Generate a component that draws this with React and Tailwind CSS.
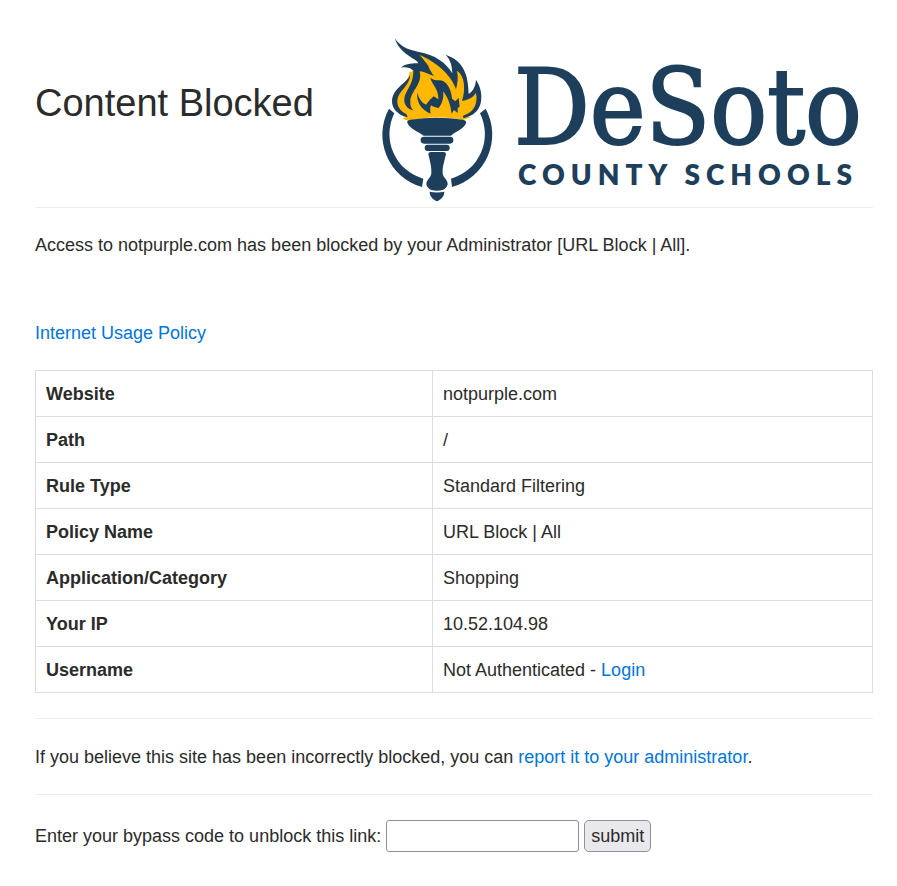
const details = [
  { label: 'Website', value: 'notpurple.com' },
  { label: 'Path', value: '/' },
  { label: 'Rule Type', value: 'Standard Filtering' },
  { label: 'Policy Name', value: 'URL Block | All' },
  { label: 'Application/Category', value: 'Shopping' },
  { label: 'Your IP', value: '10.52.104.98' },
  { label: 'Username', value: 'Not Authenticated', action: 'Login' }
];

function TextLink({ children }) {
  return (
    <a href="#" className="text-[#0275d8] hover:underline">
      {children}
    </a>
  );
}

function Logo({ className }) {
  return (
    <svg viewBox="0 0 498 177" className={className} role="img" aria-label="DeSoto County Schools">
      <g transform="scale(0.33333)" fill="#1d3f5b">
        {/* flame */}
        <path
          fill="#ffb700"
          d="M104 126 C100 160 62 175 60 214 C62 240 82 255 94 260 L82 266 L100 272 Q186 252 264 270 L286 262 L276 258 C300 245 308 230 308 212 L302 190 L284 206 L272 200 C278 170 268 125 242 112 L244 160 C220 120 185 85 130 70 L150 112 Z"
        />
        <path d="M59 25 C76 50 100 60 132 66 C178 74 214 98 232 130 C230 106 228 92 212 74 C250 88 280 112 281 192 C295 182 301 170 303 149 C318 172 322 196 317 220 C310 246 292 258 268 264 C262 264 262 258 267 256 C284 250 296 240 302 222 C305 210 306 202 302 189 C294 204 278 210 261 213 C272 178 270 138 246 122 C250 142 248 158 243 178 C232 142 190 98 134 75 C146 90 154 98 160 108 C165 120 170 130 178 138 C160 134 146 124 134 124 C144 160 108 184 106 212 C105 226 108 234 115 241 C96 236 86 222 88 206 C90 182 116 164 115 122 C104 112 92 110 78 113 C88 103 104 100 130 100 C124 84 78 78 59 25 Z" />
        <path d="M106 134 C96 160 54 172 51 212 C50 238 72 256 98 262 L94 252 C76 244 65 228 67 210 C70 182 104 168 106 134 Z" />
        <path d="M127 188 C124 216 138 238 167 251 C165 241 165 233 168 226 C175 230 182 233 191 234 C203 220 207 200 204 184 C216 198 226 218 230 251 L237 240 L248 249 L248 234 L254 230 L251 203 L241 214 L231 206 C228 172 212 148 188 151 C180 151 172 148 166 143 C170 164 192 176 190 208 L176 199 L164 210 L153 224 C140 218 132 206 127 188 Z" />
        {/* torch */}
        <path d="M97 278 Q94 272 106 269 Q186 257 264 269 Q276 272 273 280 C266 297 244 304 228 317 L146 317 C130 304 104 297 97 278 Z" />
        <rect x="137" y="320" width="98" height="21" rx="10" />
        <rect x="149" y="344" width="75" height="19" rx="9" />
        <path d="M160 372 Q160 366 168 366 H206 Q213 366 213 372 C208 396 202 408 203 430 C204 444 218 448 218 462 Q216 474 203 480 Q186 484 169 480 Q156 474 154 462 C155 448 168 444 169 430 C170 408 165 396 160 372 Z" />
        <path d="M164 485 Q186 490 208 485 C208 501 197 508 186 514 C175 508 164 501 164 485 Z" />
        {/* ring */}
        <path d="M42 236 L58 250 A139 139 0 0 0 145 446 L141 471 A163 163 0 0 1 42 236 Z" />
        <path d="M332 236 L315 250 A139 139 0 0 1 228 446 L231 471 A163 163 0 0 0 332 236 Z" />
      </g>
      <g fill="#1d3f5b">
        <text
          x="139"
          y="114"
          fontSize="105"
          stroke="#1d3f5b"
          strokeWidth="2"
          fontFamily="'DejaVu Serif Condensed', 'DejaVu Serif', serif"
        >
          DeSoto
        </text>
        <text x="143" y="155" fontSize="28" fontWeight="800" className="tracking-[6px]" fontFamily="Lato, sans-serif">
          COUNTY SCHOOLS
        </text>
      </g>
    </svg>
  );
}

export default function App() {
  return (
    <main className="bg-white pt-[30px] pr-6 pb-8 pl-[35px] font-['Liberation_Sans',Arial,sans-serif] text-[18px] leading-[26px] text-[#2b2b2b]">
      <header className="flex items-center justify-between border-b border-[#eceeef]">
        <h1 className="shrink-0 pb-8 text-[38px] leading-[42px]">Content Blocked</h1>
        <Logo className="w-[498px]" />
      </header>

      <p className="mt-6">Access to notpurple.com has been blocked by your Administrator [URL Block | All].</p>
      <p className="mt-[62px]">
        <TextLink>Internet Usage Policy</TextLink>
      </p>

      <table className="mt-6 w-full border-collapse text-left">
        <tbody>
          {details.map(({ label, value, action }) => (
            <tr key={label}>
              <th scope="row" className="h-[46px] w-[397px] border border-[#dddddd] px-2.5 font-bold">
                {label}
              </th>
              <td className="border border-[#dddddd] px-2.5">
                {value}
                {action && (
                  <>
                    {' - '}
                    <TextLink>{action}</TextLink>
                  </>
                )}
              </td>
            </tr>
          ))}
        </tbody>
      </table>

      <p className="mt-[25px] border-y border-[#eceeef] pt-[25px] pb-6">
        If you believe this site has been incorrectly blocked, you can{' '}
        <TextLink>report it to your administrator</TextLink>.
      </p>

      <form className="mt-[25px] flex items-center gap-[5px]" onSubmit={(e) => e.preventDefault()}>
        <label htmlFor="bypass">Enter your bypass code to unblock this link:</label>
        <input
          id="bypass"
          type="text"
          className="h-8 w-[193px] rounded-[3px] border border-[#8f8f9d] bg-white px-1"
        />
        <button type="submit" className="h-8 rounded-[5px] border border-[#8f8f9d] bg-[#e9e9ed] px-1.5">
          submit
        </button>
      </form>
    </main>
  );
}
